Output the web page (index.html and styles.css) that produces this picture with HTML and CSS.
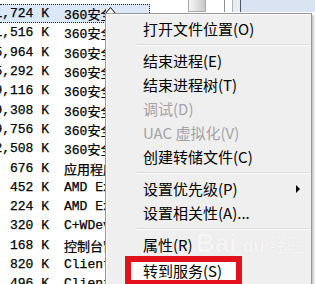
FILE: index.html
```html
<!DOCTYPE html>
<html>
<head>
<meta charset="utf-8">
<link rel="stylesheet" href="styles.css">
</head>
<body>
<div class="screen">
  <div class="list">
    <div class="row sel"><span class="mem">1,724 K</span><span class="name">360安全卫</span></div>
    <div class="row"><span class="mem">1,516 K</span><span class="name">360安全卫</span></div>
    <div class="row"><span class="mem">5,964 K</span><span class="name">360安全卫</span></div>
    <div class="row"><span class="mem">5,292 K</span><span class="name">360安全卫</span></div>
    <div class="row"><span class="mem">9,116 K</span><span class="name">360安全卫</span></div>
    <div class="row"><span class="mem">9,308 K</span><span class="name">360安全卫</span></div>
    <div class="row"><span class="mem">9,756 K</span><span class="name">360安全卫</span></div>
    <div class="row"><span class="mem">2,508 K</span><span class="name">360安全卫</span></div>
    <div class="row"><span class="mem">676 K</span><span class="name">应用程序</span></div>
    <div class="row"><span class="mem">452 K</span><span class="name">AMD Ext</span></div>
    <div class="row"><span class="mem">224 K</span><span class="name">AMD Ext</span></div>
    <div class="row"><span class="mem">320 K</span><span class="name">C+WDev</span></div>
    <div class="row"><span class="mem">168 K</span><span class="name">控制台窗</span></div>
    <div class="row"><span class="mem">820 K</span><span class="name">Client</span></div>
    <div class="row"><span class="mem">496 K</span><span class="name">Client</span></div>
  </div>
  <div class="side">
    <div class="strip">
      <span class="gap-a"></span>
      <span class="thumb"></span>
      <span class="gap-b"></span>
      <span class="vline"></span>
      <span class="gap-c"></span>
      <span class="vline light"></span>
      <span class="pale"></span>
      <span class="vline dark"></span>
      <span class="blue"></span>
    </div>
  </div>

  <svg class="cursor" width="14" height="8" viewBox="0 0 14 8">
    <path d="M1 8 L6.5 1.5 L12 8 Z" fill="#fff" stroke="#000" stroke-width="1"/>
  </svg>

  <div class="menu">
    <div class="item">打开文件位置(O)</div>
    <div class="sep"></div>
    <div class="item">结束进程(E)</div>
    <div class="item">结束进程树(T)</div>
    <div class="item off">调试(D)</div>
    <div class="item off">UAC 虚拟化(V)</div>
    <div class="item">创建转储文件(C)</div>
    <div class="sep"></div>
    <div class="item">设置优先级(P)<span class="arrow"></span></div>
    <div class="item">设置相关性(A)...</div>
    <div class="sep"></div>
    <div class="item">属性(R)</div>
    <div class="item hot"><span class="mark">转到服务(S)</span></div>
    <div class="wm"><span class="wm-big">Bai</span><span class="wm-du">du</span><span class="wm-cn">经验</span></div>
  </div>
</div>
</body>
</html>
```
FILE: styles.css
```css
html, body {
  margin: 0;
  padding: 0;
}
body {
  width: 315px;
  height: 284px;
  overflow: hidden;
  background: #fff;
}
.screen {
  position: relative;
  display: flex;
  width: 315px;
  height: 284px;
  overflow: hidden;
  background: #fff;
}
.list {
  width: 150px;
  flex: none;
  padding-top: 4px;
}
.row {
  display: flex;
  align-items: center;
  height: 19.3px;
  box-sizing: border-box;
  white-space: nowrap;
  font-family: "Liberation Mono", "Noto Sans CJK SC", monospace;
  font-size: 13px;
  color: #000;
  -webkit-text-stroke: 0.25px #000;
}
.row.sel {
  background: #dbe8f8;
  border-top: 1px dotted #222;
  border-bottom: 1px dotted #222;
  border-right: 1px dotted #222;
}
.mem {
  width: 49px;
  flex: none;
  display: flex;
  justify-content: flex-end;
}
.name {
  width: 42px;
  flex: none;
  margin-left: 15px;
  overflow: hidden;
}
.side {
  flex: 1;
  display: flex;
  flex-direction: column;
}
.strip {
  display: flex;
  height: 13px;
  margin-top: -1px;
}
.gap-a { width: 38px; background: #fff; }
.thumb {
  width: 18px;
  box-sizing: border-box;
  border: 1px solid #a8a8a8;
  border-top: none;
  background: linear-gradient(to right, #f6f6f6, #dcdcdc 60%, #c8c8c8);
}
.gap-b { width: 18px; background: #fff; }
.vline { width: 1px; background: #8e8e8e; }
.vline.light { background: #b4b4b4; }
.vline.dark { background: #4a5668; }
.gap-c { width: 7px; background: #fff; }
.pale { width: 7px; background: #e8edf4; }
.blue { flex: 1; background: #d9e3f1; }

.cursor {
  position: absolute;
  left: 104px;
  top: 6px;
}

.menu {
  position: absolute;
  left: 105px;
  top: 13px;
  width: 207px;
  height: 290px;
  box-sizing: border-box;
  padding-top: 3px;
  background: #f0eff0;
  border: 1px solid #979797;
  box-shadow: inset 1px 1px 0 #fbfbfb, 2px 2px 2px rgba(0, 0, 0, 0.22);
  font-family: "Noto Sans CJK SC", sans-serif;
  font-size: 15px;
  color: #000;
}
.item {
  position: relative;
  height: 24px;
  line-height: 24px;
  padding-left: 37px;
  white-space: nowrap;
}
.item.off {
  color: #a3a3a3;
}
.sep {
  display: flex;
  align-items: center;
  height: 8px;
  padding-left: 31px;
  padding-right: 2px;
}
.sep::before {
  content: "";
  flex: 1;
  height: 0;
  border-top: 1px solid #dcdcdc;
  border-bottom: 1px solid #fdfdfd;
}
.arrow {
  position: absolute;
  right: 11px;
  top: 8px;
  width: 0;
  height: 0;
  border-left: 4px solid #000;
  border-top: 4px solid transparent;
  border-bottom: 4px solid transparent;
}
.item.hot {
  padding-left: 19px;
  line-height: normal;
}
.mark {
  display: block;
  width: 93px;
  height: 18px;
  line-height: 18px;
  margin-top: -1px;
  padding-left: 12px;
  border: 6px solid #e3111b;
  background: #fdfdfd;
}
.wm {
  position: absolute;
  left: 90px;
  top: 214px;
  display: flex;
  align-items: baseline;
  gap: 2px;
  color: #f6f5f6;
  text-shadow: 0 0 1px #dadada;
  pointer-events: none;
}
.wm-big {
  font-family: "Liberation Sans", sans-serif;
  font-weight: bold;
  font-size: 26px;
}
.wm-du {
  font-family: "Liberation Sans", sans-serif;
  font-weight: bold;
  font-size: 18px;
  margin-left: 4px;
}
.wm-cn {
  font-family: "Noto Sans CJK SC", sans-serif;
  font-size: 18px;
  margin-left: 2px;
}
```
